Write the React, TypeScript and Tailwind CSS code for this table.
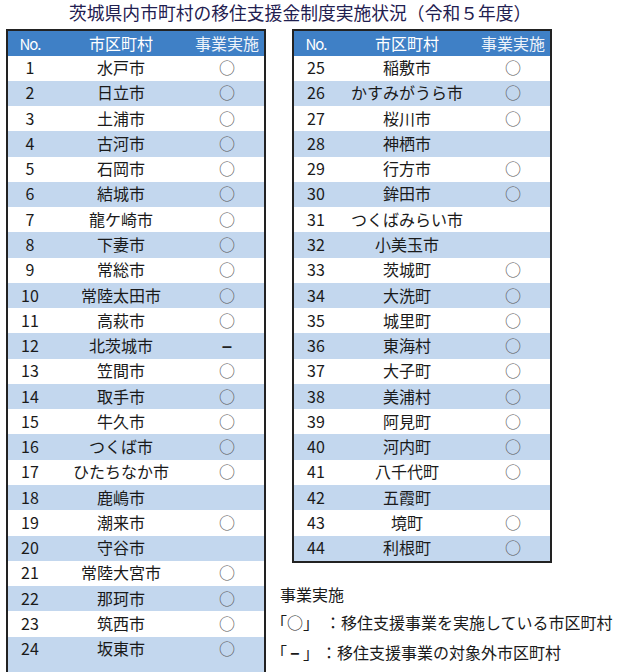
const left: [number, string, string][] = [
  [1, "水戸市", "○"],
  [2, "日立市", "○"],
  [3, "土浦市", "○"],
  [4, "古河市", "○"],
  [5, "石岡市", "○"],
  [6, "結城市", "○"],
  [7, "龍ケ崎市", "○"],
  [8, "下妻市", "○"],
  [9, "常総市", "○"],
  [10, "常陸太田市", "○"],
  [11, "高萩市", "○"],
  [12, "北茨城市", "–"],
  [13, "笠間市", "○"],
  [14, "取手市", "○"],
  [15, "牛久市", "○"],
  [16, "つくば市", "○"],
  [17, "ひたちなか市", "○"],
  [18, "鹿嶋市", ""],
  [19, "潮来市", "○"],
  [20, "守谷市", ""],
  [21, "常陸大宮市", "○"],
  [22, "那珂市", "○"],
  [23, "筑西市", "○"],
  [24, "坂東市", "○"],
];

const right: [number, string, string][] = [
  [25, "稲敷市", "○"],
  [26, "かすみがうら市", "○"],
  [27, "桜川市", "○"],
  [28, "神栖市", ""],
  [29, "行方市", "○"],
  [30, "鉾田市", "○"],
  [31, "つくばみらい市", ""],
  [32, "小美玉市", ""],
  [33, "茨城町", "○"],
  [34, "大洗町", "○"],
  [35, "城里町", "○"],
  [36, "東海村", "○"],
  [37, "大子町", "○"],
  [38, "美浦村", "○"],
  [39, "阿見町", "○"],
  [40, "河内町", "○"],
  [41, "八千代町", "○"],
  [42, "五霞町", ""],
  [43, "境町", "○"],
  [44, "利根町", "○"],
];

function Table({ rows, cut }: { rows: [number, string, string][]; cut?: boolean }) {
  return (
    <div className="w-[260px] border-2 border-[#222] shrink-0">
      {/* header */}
      <div className="flex h-[24.5px] items-center bg-[#3f80c6] text-white">
        <div className="w-[44px] text-center text-[15px] tracking-[-1px]">No.</div>
        <div className="w-[138px] text-center">市区町村</div>
        <div className="flex-1 text-center text-[#eef3fa]">事業実施</div>
      </div>
      {rows.map(([no, name, mark], i) => (
        <div
          key={no}
          className={`flex h-[25.27px] items-center text-[#1a1a1a] ${i % 2 === 1 ? "bg-[#c3d7ee]" : "bg-white"}`}
        >
          <div className="w-[44px] text-center -mt-[2px]">{no}</div>
          <div className="w-[138px] text-center whitespace-nowrap -mt-[2px]">{name}</div>
          <div
            className={`flex-1 text-center -mt-[2px] ${mark === "–" ? "font-bold text-[20px] text-[#222]" : "text-[#555]"}`}
          >
            {mark}
          </div>
        </div>
      ))}
      {/* the last row runs past the bottom of the picture */}
      {cut && <div className="h-[14px] bg-[#c3d7ee]" />}
    </div>
  );
}

export default function App() {
  return (
    <div
      className="w-[620px] h-[672px] overflow-hidden bg-white text-[16px] leading-none"
      style={{ fontFamily: '"Noto Sans CJK JP", "Noto Sans", sans-serif' }}
    >
      <div className="h-[29px] pl-[69px] pt-[4px] text-[17.8px] text-[#1f2050] whitespace-nowrap">
        茨城県内市町村の移住支援金制度実施状況（令和５年度）
      </div>
      <div className="flex pl-[6px] gap-[26px]">
        <Table rows={left} cut />
        <div className="flex flex-col">
          <Table rows={right} />
          <div className="mt-[17px] -ml-[21px] text-[#1a1a1a] leading-[28.5px] whitespace-nowrap">
            <div className="pl-[9px]">事業実施</div>
            <div>
              「○」<span className="ml-[14px]">：移住支援事業を実施している市区町村</span>
            </div>
            <div>
              「<span className="inline-block w-[16px] text-center font-bold text-[18px]">–</span>」
              <span className="ml-[10px]">：移住支援事業の対象外市区町村</span>
            </div>
          </div>
        </div>
      </div>
    </div>
  );
}
